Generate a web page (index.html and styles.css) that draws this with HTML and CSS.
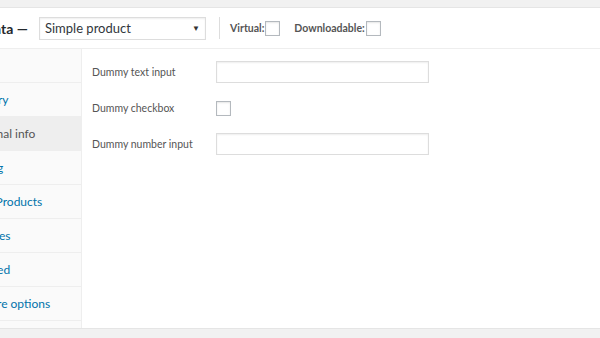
FILE: index.html
```html
<!DOCTYPE html>
<html lang="en">
<head>
    <meta charset="UTF-8">
    <title>Product data</title>
    <link rel="stylesheet" href="styles.css">
</head>
<body>
    <div class="postbox">
        <div class="postbox-header">
            <h2 class="hndle">Product data —</h2>
            <div class="type-select">
                <span>Simple product</span>
                <span class="arrow">&#9660;</span>
            </div>
            <div class="sep"></div>
            <label class="opt">Virtual: <span class="checkbox"></span></label>
            <label class="opt">Downloadable: <span class="checkbox"></span></label>
        </div>

        <div class="product-data">
            <ul class="tabs">
                <li><a href="#">General</a></li>
                <li><a href="#">Inventory</a></li>
                <li class="active"><a href="#">Additional info</a></li>
                <li><a href="#">Shipping</a></li>
                <li><a href="#">Linked Products</a></li>
                <li><a href="#">Attributes</a></li>
                <li><a href="#">Advanced</a></li>
                <li><a href="#">Get more options</a></li>
            </ul>

            <div class="panel">
                <p class="form-field">
                    <label>Dummy text input</label>
                    <span class="text-input"></span>
                </p>
                <p class="form-field">
                    <label>Dummy checkbox</label>
                    <span class="checkbox"></span>
                </p>
                <p class="form-field">
                    <label>Dummy number input</label>
                    <span class="text-input"></span>
                </p>
            </div>
        </div>
    </div>
</body>
</html>
```

FILE: styles.css
```css
html, body {
    overflow: hidden;
}
body {
    margin: 0;
    padding-top: 7px;
    background-color: #f1f1f1;
    font-family: 'Lato', 'Noto Sans', sans-serif;
    font-size: 12px;
    color: #555;
}
.postbox {
    margin-left: -120px;
    width: 900px;
    height: 320px;
    background-color: #fff;
    border: 1px solid #e5e5e5;
    box-shadow: 0 1px 1px rgba(0, 0, 0, 0.04);
}
.postbox-header {
    display: flex;
    align-items: center;
    height: 40px;
    border-bottom: 1px solid #eee;
}
.hndle {
    margin: 0;
    width: 158px;
    padding-right: 11px;
    text-align: right;
    box-sizing: border-box;
    font-size: 14px;
    font-weight: 700;
    color: #23282d;
}
.type-select {
    display: flex;
    justify-content: space-between;
    align-items: center;
    width: 167px;
    height: 23px;
    padding: 0 5px;
    box-sizing: border-box;
    border: 1px solid #ddd;
    box-shadow: inset 0 1px 2px rgba(0, 0, 0, 0.07);
    font-size: 13px;
    color: #32373c;
}
.type-select .arrow {
    font-size: 8px;
    color: #333;
}
.sep {
    width: 1px;
    height: 22px;
    background-color: #ddd;
    margin: 0 10px 0 13px;
}
.opt {
    display: flex;
    align-items: center;
    gap: 1px;
    margin-right: 14px;
    font-size: 10.5px;
    font-weight: 700;
    color: #555;
}
.checkbox {
    display: inline-block;
    width: 13px;
    height: 13px;
    border: 1px solid #b4b9be;
    background-color: #fff;
    box-shadow: inset 0 1px 2px rgba(0, 0, 0, 0.1);
}
.product-data {
    display: flex;
    height: 279px;
}
.tabs {
    list-style: none;
    margin: 0;
    padding: 0;
    width: 200px;
    background-color: #fafafa;
    border-right: 1px solid #eee;
}
.tabs li {
    border-bottom: 1px solid #eee;
}
.tabs li a {
    display: block;
    height: 33px;
    line-height: 33px;
    padding-left: 77px;
    font-size: 12px;
    color: #0073aa;
    text-decoration: none;
}
.tabs li:first-child a {
    visibility: hidden;
}
.tabs li.active a {
    background-color: #eee;
    color: #555;
}
.panel {
    flex: 1;
    padding: 12px 0 0 10px;
}
.form-field {
    display: flex;
    align-items: center;
    height: 22px;
    margin: 0 0 14px;
}
.form-field label {
    width: 124px;
    font-size: 10.5px;
    color: #555;
}
.text-input {
    display: block;
    width: 211px;
    height: 20px;
    border: 1px solid #ddd;
    box-shadow: inset 0 1px 2px rgba(0, 0, 0, 0.07);
}
```
